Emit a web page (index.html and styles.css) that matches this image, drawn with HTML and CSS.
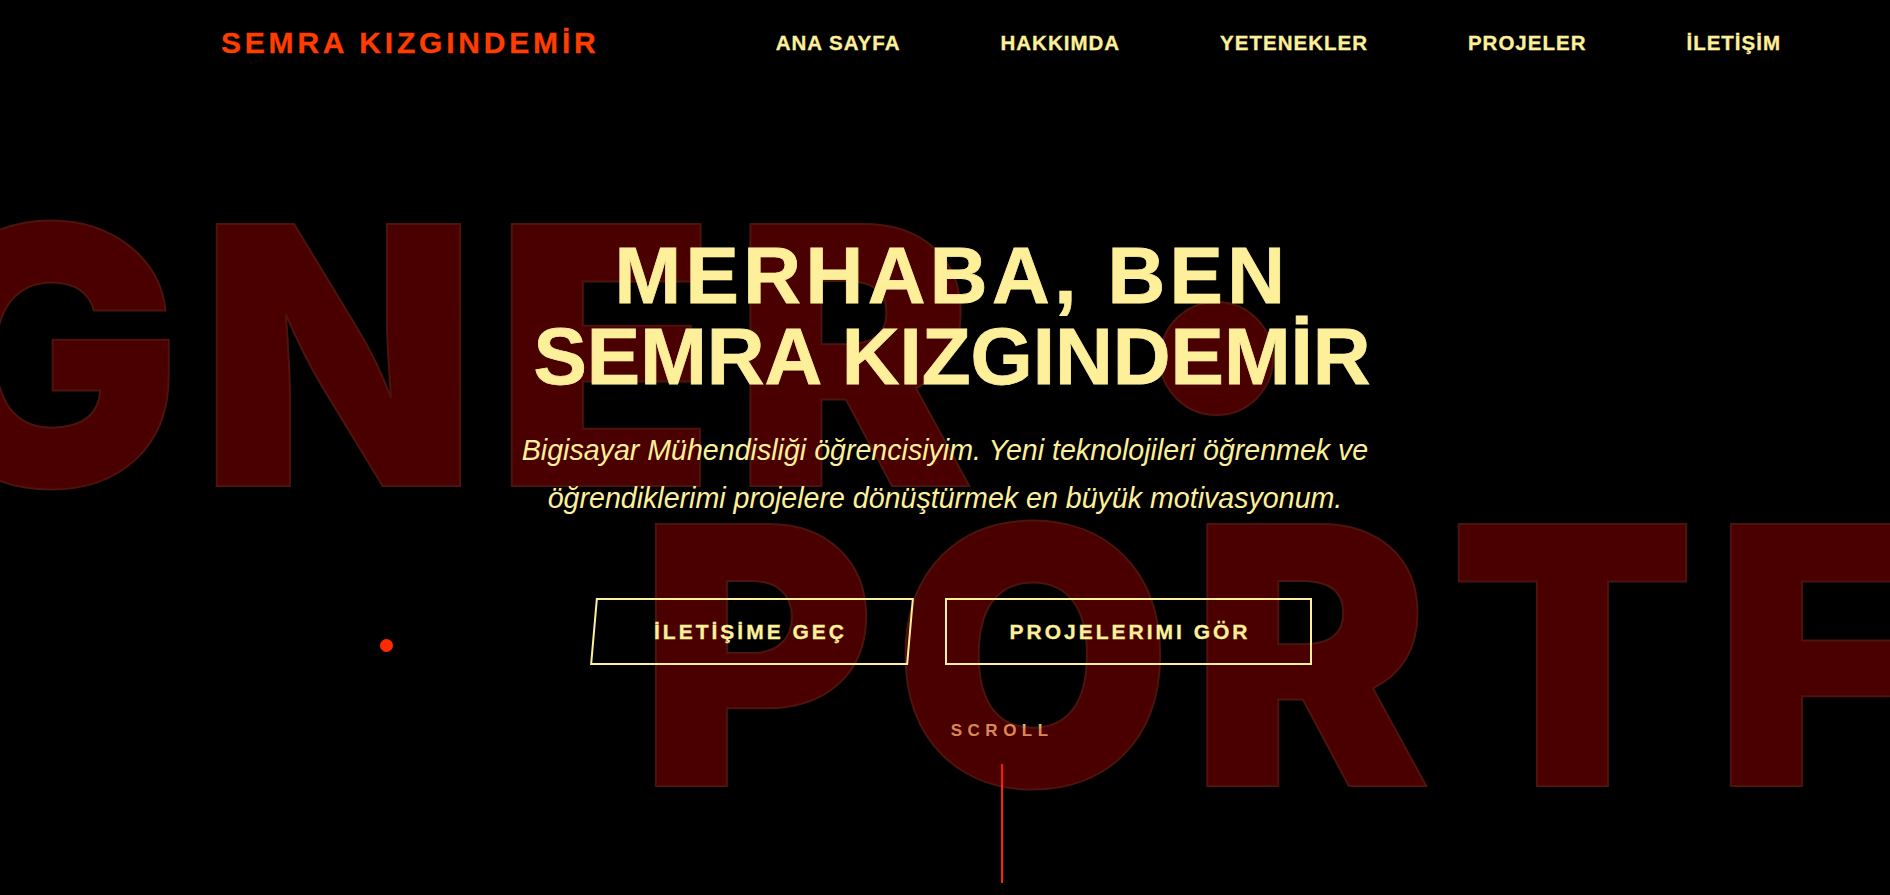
FILE: index.html
```html
<!DOCTYPE html>
<html lang="tr">
<head>
<meta charset="utf-8">
<title>Semra Kızgındemir</title>
<link rel="stylesheet" href="styles.css">
</head>
<body>
<div class="page">
  <header class="header">
    <a class="logo" href="#">SEMRA KIZGINDEMİR</a>
    <nav class="nav">
      <a href="#">ANA SAYFA</a>
      <a href="#">HAKKIMDA</a>
      <a href="#">YETENEKLER</a>
      <a href="#">PROJELER</a>
      <a href="#">İLETİŞİM</a>
    </nav>
  </header>

  <div class="bg-words" aria-hidden="true">
    <div class="bg-line bg-line-1">DESIGNER</div>
    <div class="bg-line bg-line-2">PORTFOLIO</div>
    <span class="bg-blob"></span>
  </div>

  <div class="scroll">
    <span class="scroll-label">SCROLL</span>
    <span class="scroll-line"></span>
  </div>

  <section class="hero">
    <h1 class="hero-title"><span class="title-top">MERHABA, BEN</span><br><span class="title-name">SEMRA KIZGINDEMİR</span></h1>
    <p class="hero-text">Bigisayar Mühendisliği öğrencisiyim. Yeni teknolojileri öğrenmek ve<br>öğrendiklerimi projelere dönüştürmek en büyük motivasyonum.</p>
    <div class="actions">
      <a class="btn btn-skew" href="#">İLETİŞİME GEÇ</a>
      <a class="btn btn-box" href="#">PROJELERIMI GÖR</a>
    </div>
  </section>

  <span class="cursor-dot"></span>
</div>
</body>
</html>
```
FILE: styles.css
```css
* { box-sizing: border-box; }

html, body {
  margin: 0;
  padding: 0;
  background: #000;
}

body {
  font-family: "Liberation Sans", Arial, sans-serif;
  color: #fef09a;
}

a { text-decoration: none; color: inherit; }

.page {
  position: relative;
  width: 100%;
  height: 895px;
  overflow: hidden;
  background: #000;
}

/* Header */
.header {
  position: relative;
  z-index: 3;
  height: 86px;
  display: flex;
  align-items: center;
  justify-content: space-between;
  padding: 0 109px 0 221px;
}

.logo {
  font-size: 30px;
  font-weight: 700;
  letter-spacing: 3.8px;
  color: #ff3d00;
  -webkit-text-stroke: 0.3px #ff3d00;
}

.nav {
  display: flex;
  gap: 100px;
}

.nav a {
  font-size: 20.5px;
  font-weight: 700;
  letter-spacing: 1px;
  color: #fef09a;
  -webkit-text-stroke: 0.3px #fef09a;
}

/* Background giant words */
.bg-words {
  position: absolute;
  inset: 0;
  z-index: 1;
  opacity: 0.3;
  pointer-events: none;
  padding-top: 205px;
  font-family: "Inter", "Liberation Sans", sans-serif;
  font-weight: 900;
  font-size: 360px;
  line-height: 300px;
  letter-spacing: 18px;
  color: #f70000;
  -webkit-text-stroke: 2px #ff4030;
  white-space: nowrap;
}

.bg-line-1 { margin-left: -987px; }
.bg-line-2 { margin-left: 639px; }

.bg-blob {
  position: absolute;
  left: 1159px;
  top: 301px;
  width: 115px;
  height: 115px;
  border-radius: 50%;
  background: #f70000;
  border: 2px solid #ff4030;
}

/* Scroll indicator */
.scroll {
  position: absolute;
  z-index: 0;
  left: 53%;
  top: 721px;
  transform: translateX(-50%);
  display: flex;
  flex-direction: column;
  align-items: center;
}

.scroll-label {
  font-size: 17px;
  font-weight: 700;
  line-height: 20px;
  letter-spacing: 5.5px;
  padding-left: 1px;
  color: rgba(254, 240, 154, 0.83);
}

.scroll-line {
  display: block;
  width: 2px;
  height: 119px;
  margin-top: 23px;
  background: #ff2a00;
}

/* Hero */
.hero {
  position: relative;
  z-index: 2;
  display: flex;
  flex-direction: column;
  align-items: center;
  text-align: center;
  padding-top: 149px;
}

.hero-title {
  margin: 0;
  padding-left: 14px;
  font-size: 80px;
  line-height: 81px;
  font-weight: 700;
  color: #fef09a;
  -webkit-text-stroke: 0.8px #fef09a;
}

.title-top {
  letter-spacing: 4.4px;
}

.hero-text {
  margin: 29px 0 0;
  font-size: 28.6px;
  line-height: 48px;
  font-style: italic;
  color: #fef09a;
}

.actions {
  display: flex;
  gap: 34px;
  margin-top: 76px;
  padding-left: 15px;
}

.btn {
  position: relative;
  display: block;
  font-size: 21px;
  font-weight: 700;
  letter-spacing: 3px;
  line-height: 23px;
  color: #fef09a;
  -webkit-text-stroke: 0.3px #fef09a;
}

.btn-box {
  padding: 20px 59px 20px 62px;
  border: 2px solid #fef09a;
}

.btn-skew {
  padding: 22px 64.5px 22px 60.5px;
}

.btn-skew::before {
  content: "";
  position: absolute;
  inset: 0;
  border: 2px solid #fef09a;
  transform: skewX(-5deg);
}

.cursor-dot {
  position: absolute;
  z-index: 4;
  left: 380px;
  top: 639px;
  width: 13px;
  height: 13px;
  border-radius: 50%;
  background: #ff2a00;
}
```
